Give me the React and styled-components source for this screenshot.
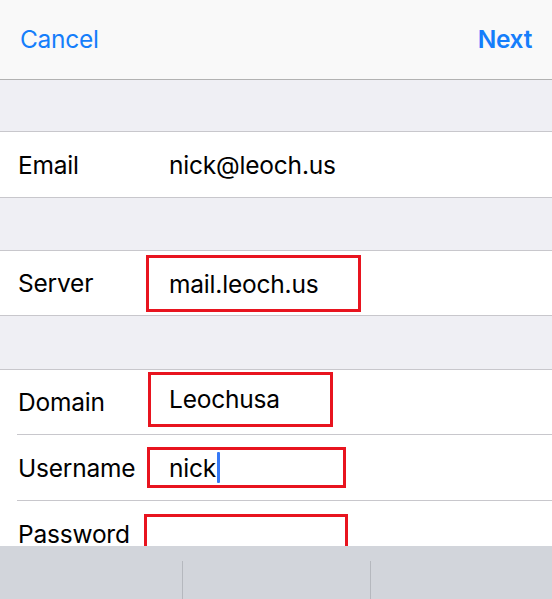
import React from 'react';
import styled, { createGlobalStyle } from 'styled-components';

const blueColor = '#157efb';
const redColor = '#e8141f';
const groupBg = '#efeff4';
const cellBorder = '#c8c7cc';
const sfFont = '"Inter", "Roboto", "Liberation Sans", sans-serif';

const GlobalStyle = createGlobalStyle`
  html, body {
    margin: 0;
    padding: 0;
    background: ${groupBg};
  }
`;

const Screen = styled.div`
  width: 552px;
  height: 599px;
  display: flex;
  flex-direction: column;
  overflow: hidden;
  font-family: ${sfFont};
  background: ${groupBg};
`;

const NavBar = styled.div`
  height: 80px;
  flex-shrink: 0;
  display: flex;
  justify-content: space-between;
  align-items: center;
  padding: 0 20px 2px 20px;
  box-sizing: border-box;
  background: #f9f9f9;
  border-bottom: 1px solid #b2b2b2;
`;

const NavButton = styled.span`
  color: ${blueColor};
  font-size: 24.5px;
  font-weight: ${p => (p.$bold ? 600 : 400)};
  letter-spacing: -0.3px;
`;

const Content = styled.div`
  flex: 1;
  overflow: hidden;
  display: flex;
  flex-direction: column;
`;

const Gap = styled.div`
  height: ${p => p.$h}px;
  flex-shrink: 0;
`;

const Group = styled.div`
  flex-shrink: 0;
  background: #fff;
  border-top: 1px solid ${cellBorder};
  border-bottom: 1px solid ${cellBorder};
`;

const Row = styled.div`
  height: ${p => p.$h || 65}px;
  display: flex;
  align-items: center;
  margin-left: 17px;
  padding-left: 1px;

  & + & {
    border-top: 1px solid ${cellBorder};
  }
`;

const Label = styled.div`
  width: 128px;
  flex-shrink: 0;
  font-size: 24.5px;
  color: #000;
  letter-spacing: -0.2px;
`;

const Value = styled.div`
  box-sizing: border-box;
  display: flex;
  align-items: center;
  margin-left: ${p => p.$dx || 0}px;
  margin-top: ${p => p.$dy || 0}px;
  width: ${p => (p.$w ? `${p.$w}px` : 'auto')};
  height: ${p => (p.$h ? `${p.$h}px` : 'auto')};
  padding-left: ${p => 20 - (p.$dx || 0)}px;
  border: 3px solid ${p => (p.$boxed ? redColor : 'transparent')};
  font-size: 24.5px;
  color: #000;
  letter-spacing: -0.2px;
`;

const Caret = styled.span`
  display: inline-block;
  width: 3px;
  height: 31px;
  background: #3478f6;
  margin-left: 1px;
  border-radius: 1px;
`;

const Accessory = styled.div`
  height: 53px;
  flex-shrink: 0;
  display: flex;
  background: #d2d5db;
`;

const Slot = styled.div`
  width: ${p => (p.$w ? `${p.$w}px` : 'auto')};
  flex: ${p => (p.$w ? '0 0 auto' : '1')};
  margin-top: 15px;
  border-left: ${p => (p.$first ? 'none' : '1px solid #b5b8be')};
`;

export default function App() {
  return (
    <Screen>
      <GlobalStyle />
      <NavBar>
        <NavButton>Cancel</NavButton>
        <NavButton $bold>Next</NavButton>
      </NavBar>

      <Content>
        <Gap $h={51} />
        <Group>
          <Row>
            <Label>Email</Label>
            <Value $dx={-2}>nick@leoch.us</Value>
          </Row>
        </Group>

        <Gap $h={52} />
        <Group>
          <Row $h={64}>
            <Label>Server</Label>
            <Value $boxed $w={215} $h={57} $dx={0} $dy={1}>
              mail.leoch.us
            </Value>
          </Row>
        </Group>

        <Gap $h={53} />
        <Group>
          <Row $h={64}>
            <Label>Domain</Label>
            <Value $boxed $w={185} $h={55} $dx={2} $dy={-6}>
              Leochusa
            </Value>
          </Row>
          <Row $h={65}>
            <Label>Username</Label>
            <Value $boxed $w={199} $h={41} $dx={1}>
              nick<Caret />
            </Value>
          </Row>
          <Row $h={65}>
            <Label>Password</Label>
            <Value $boxed $w={204} $h={41} $dx={-2} $dy={1} />
          </Row>
        </Group>
      </Content>

      <Accessory>
        <Slot $first $w={182} />
        <Slot $w={187} />
        <Slot />
      </Accessory>
    </Screen>
  );
}
